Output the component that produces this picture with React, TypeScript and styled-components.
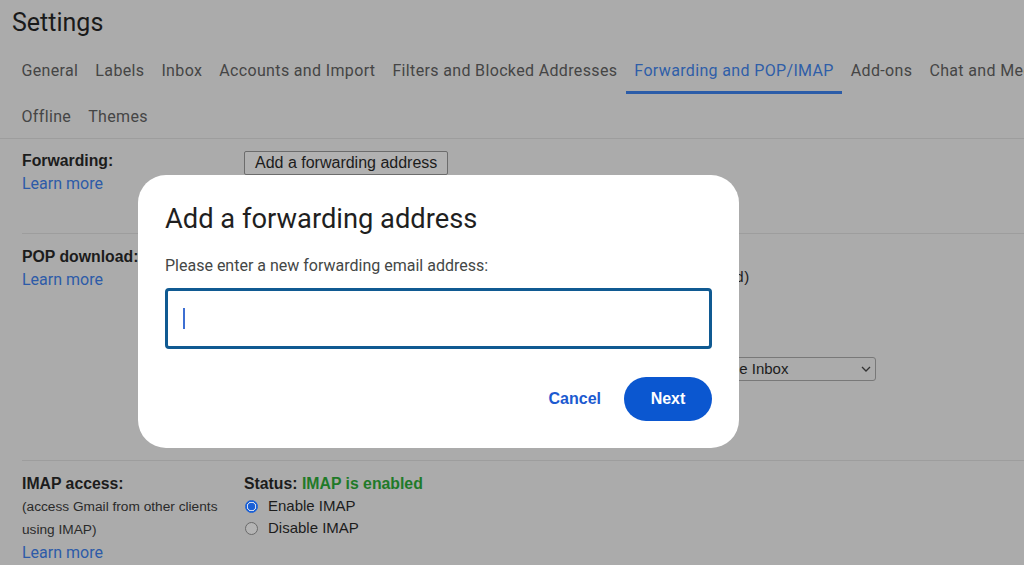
import styled, { createGlobalStyle } from "styled-components";

const GlobalStyle = createGlobalStyle`
  html, body {
    margin: 0;
    padding: 0;
    background: #ababab;
    overflow: hidden;
  }
  body {
    font-family: "Liberation Sans", Arial, sans-serif;
    color: #1c1c1c;
  }
`;

const tabsRow1 = [
  "General",
  "Labels",
  "Inbox",
  "Accounts and Import",
  "Filters and Blocked Addresses",
  "Forwarding and POP/IMAP",
  "Add-ons",
  "Chat and Meet",
];
const tabsRow2 = ["Offline", "Themes"];

export default function App() {
  return (
    <>
      <GlobalStyle />
      <Page>
        <Title>Settings</Title>
        <TabBar>
          <TabRow $first>
            {tabsRow1.map((t) => (
              <Tab key={t} $active={t === "Forwarding and POP/IMAP"}>
                {t}
              </Tab>
            ))}
          </TabRow>
          <TabRow>
            {tabsRow2.map((t) => (
              <Tab key={t}>{t}</Tab>
            ))}
          </TabRow>
        </TabBar>

        <Section $height={94} $top={11}>
          <Label>
            <strong>Forwarding:</strong>
            <LearnMore>Learn more</LearnMore>
          </Label>
          <Content>
            <GrayButton>Add a forwarding address</GrayButton>
          </Content>
        </Section>

        <Section $border $height={227}>
          <Label>
            <strong>POP download:</strong>
            <LearnMore>Learn more</LearnMore>
          </Label>
          <Content $offset={20}>
            <Option $wide>
              <Radio />
              Enable POP for all mail (even mail that's already been downloaded)
            </Option>
            <Option>
              <Radio />
              Enable POP for mail that arrives from now on
            </Option>
            <Option>
              <Radio $checked />
              Disable POP
            </Option>
            <SelectRow>
              <strong>2. When messages are accessed with POP</strong>
              <FakeSelect>
                keep Gmail's copy in the Inbox
                <svg width="10" height="6" viewBox="0 0 10 6">
                  <path d="M1 1l4 4 4-4" fill="none" stroke="#333" strokeWidth="1.3" />
                </svg>
              </FakeSelect>
            </SelectRow>
          </Content>
        </Section>

        <Section $border>
          <Label>
            <strong>IMAP access:</strong>
            <Small>(access Gmail from other clients</Small>
            <Small>using IMAP)</Small>
            <LearnMore>Learn more</LearnMore>
          </Label>
          <Content>
            <Line>
              <strong>Status: </strong>
              <Enabled>IMAP is enabled</Enabled>
            </Line>
            <Option>
              <Radio $checked />
              Enable IMAP
            </Option>
            <Option>
              <Radio />
              Disable IMAP
            </Option>
          </Content>
        </Section>

        <Dialog>
          <DialogTitle>Add a forwarding address</DialogTitle>
          <DialogText>Please enter a new forwarding email address:</DialogText>
          <InputBox>
            <Caret />
          </InputBox>
          <Actions>
            <TextButton>Cancel</TextButton>
            <PrimaryButton>Next</PrimaryButton>
          </Actions>
        </Dialog>
      </Page>
    </>
  );
}

const Page = styled.div`
  position: relative;
  width: 1024px;
  height: 565px;
  overflow: hidden;
`;

const Title = styled.h1`
  margin: 0;
  padding: 8px 0 0 12px;
  height: 43px;
  box-sizing: border-box;
  font-family: Roboto, sans-serif;
  font-weight: 400;
  font-size: 25px;
  line-height: 30px;
  color: #1a1a1a;
`;

const TabBar = styled.div`
  padding-left: 13px;
  border-bottom: 1px solid #9d9d9d;
`;

const TabRow = styled.div<{ $first?: boolean }>`
  display: flex;
  white-space: nowrap;
  height: ${(p) => (p.$first ? "51px" : "44px")};
  padding-top: ${(p) => (p.$first ? "7px" : "3px")};
  box-sizing: border-box;
`;

const Tab = styled.div<{ $active?: boolean }>`
  display: flex;
  align-items: center;
  padding: 0 8.5px;
  font-family: Roboto, sans-serif;
  font-size: 16px;
  letter-spacing: 0.35px;
  color: ${(p) => (p.$active ? "#2f5ea8" : "#454545")};
  border-bottom: 3px solid ${(p) => (p.$active ? "#2b5ca8" : "transparent")};
  box-sizing: border-box;
`;

const Section = styled.div<{ $border?: boolean; $height?: number; $top?: number }>`
  display: grid;
  grid-template-columns: 222px 1fr;
  margin-left: 22px;
  padding-top: ${(p) => p.$top ?? 12}px;
  border-top: ${(p) => (p.$border ? "1px solid #9d9d9d" : "none")};
  height: ${(p) => (p.$height ? `${p.$height}px` : "auto")};
  box-sizing: border-box;
  font-size: 15px;
  line-height: 22px;
  white-space: nowrap;
`;

const Label = styled.div`
  display: flex;
  flex-direction: column;
  strong {
    font-weight: 700;
    font-size: 15.8px;
    color: #1c1c1c;
  }
`;

const LearnMore = styled.span`
  font-family: Roboto, sans-serif;
  font-size: 16px;
  line-height: 23px;
  color: #2d5ba8;
`;

const Small = styled.span`
  font-size: 13.7px;
  line-height: 23px;
  color: #2a2a2a;
`;

const Content = styled.div<{ $offset?: number }>`
  display: flex;
  flex-direction: column;
  align-items: flex-start;
  padding-top: ${(p) => p.$offset ?? 0}px;
`;

const Line = styled.div`
  color: #1c1c1c;
  strong {
    font-size: 15.8px;
  }
`;

const Option = styled.label<{ $wide?: boolean }>`
  display: flex;
  align-items: center;
  gap: 10px;
  margin-left: 1px;
  color: #1c1c1c;
  letter-spacing: ${(p) => (p.$wide ? "0.5px" : "0")};
`;

const Radio = styled.span<{ $checked?: boolean }>`
  width: 13px;
  height: 13px;
  border-radius: 50%;
  box-sizing: border-box;
  border: 1px solid ${(p) => (p.$checked ? "#1a5fd6" : "#6a6a6a")};
  background: ${(p) =>
    p.$checked
      ? "radial-gradient(circle, #1a5fd6 0 3.5px, #cfd8ea 4px 4.6px, #1a62d8 5px)"
      : "#b4b4b4"};
`;

const SelectRow = styled.div`
  display: flex;
  align-items: center;
  gap: 34px;
  margin-top: 24px;
  height: 26px;
`;

const FakeSelect = styled.div`
  display: flex;
  align-items: center;
  gap: 73px;
  height: 22px;
  padding: 0 4px 0 3px;
  border: 1px solid #787878;
  border-radius: 3px;
  font-size: 15px;
  color: #1c1c1c;
`;

const GrayButton = styled.div`
  height: 24px;
  box-sizing: border-box;
  margin-top: 1px;
  padding: 0 10px;
  border: 1px solid #6c6c6c;
  border-radius: 2px;
  background: #b1b1b1;
  font-size: 16px;
  line-height: 22px;
  color: #1c1c1c;
`;

const Enabled = styled.strong`
  color: #1f7a28;
`;

const Dialog = styled.div`
  position: absolute;
  left: 138px;
  top: 175px;
  width: 601px;
  height: 273px;
  box-sizing: border-box;
  padding: 27px;
  background: #fff;
  border-radius: 28px;
  display: flex;
  flex-direction: column;
`;

const DialogTitle = styled.h2`
  margin: 0;
  font-family: Roboto, sans-serif;
  font-weight: 400;
  font-size: 27.3px;
  line-height: 34px;
  color: #1f1f1f;
`;

const DialogText = styled.p`
  margin: 20px 0 0;
  font-family: Roboto, sans-serif;
  font-size: 16px;
  line-height: 20px;
  color: #444746;
`;

const InputBox = styled.div`
  margin-top: 12px;
  height: 61px;
  flex-shrink: 0;
  box-sizing: border-box;
  border: 3px solid #105a92;
  border-radius: 4px;
  display: flex;
  align-items: center;
  padding-left: 15px;
`;

const Caret = styled.span`
  width: 1.5px;
  height: 21px;
  background: #3d6fd2;
`;

const Actions = styled.div`
  margin-top: auto;
  display: flex;
  justify-content: flex-end;
  align-items: center;
  gap: 23px;
`;

const TextButton = styled.span`
  font-family: "Liberation Sans", Arial, sans-serif;
  font-weight: 700;
  font-size: 16px;
  color: #1c5ad0;
`;

const PrimaryButton = styled.span`
  width: 88px;
  height: 44px;
  flex-shrink: 0;
  border-radius: 22px;
  background: #0b57d0;
  color: #fff;
  display: flex;
  align-items: center;
  justify-content: center;
  font-family: "Liberation Sans", Arial, sans-serif;
  font-weight: 700;
  font-size: 16px;
`;
